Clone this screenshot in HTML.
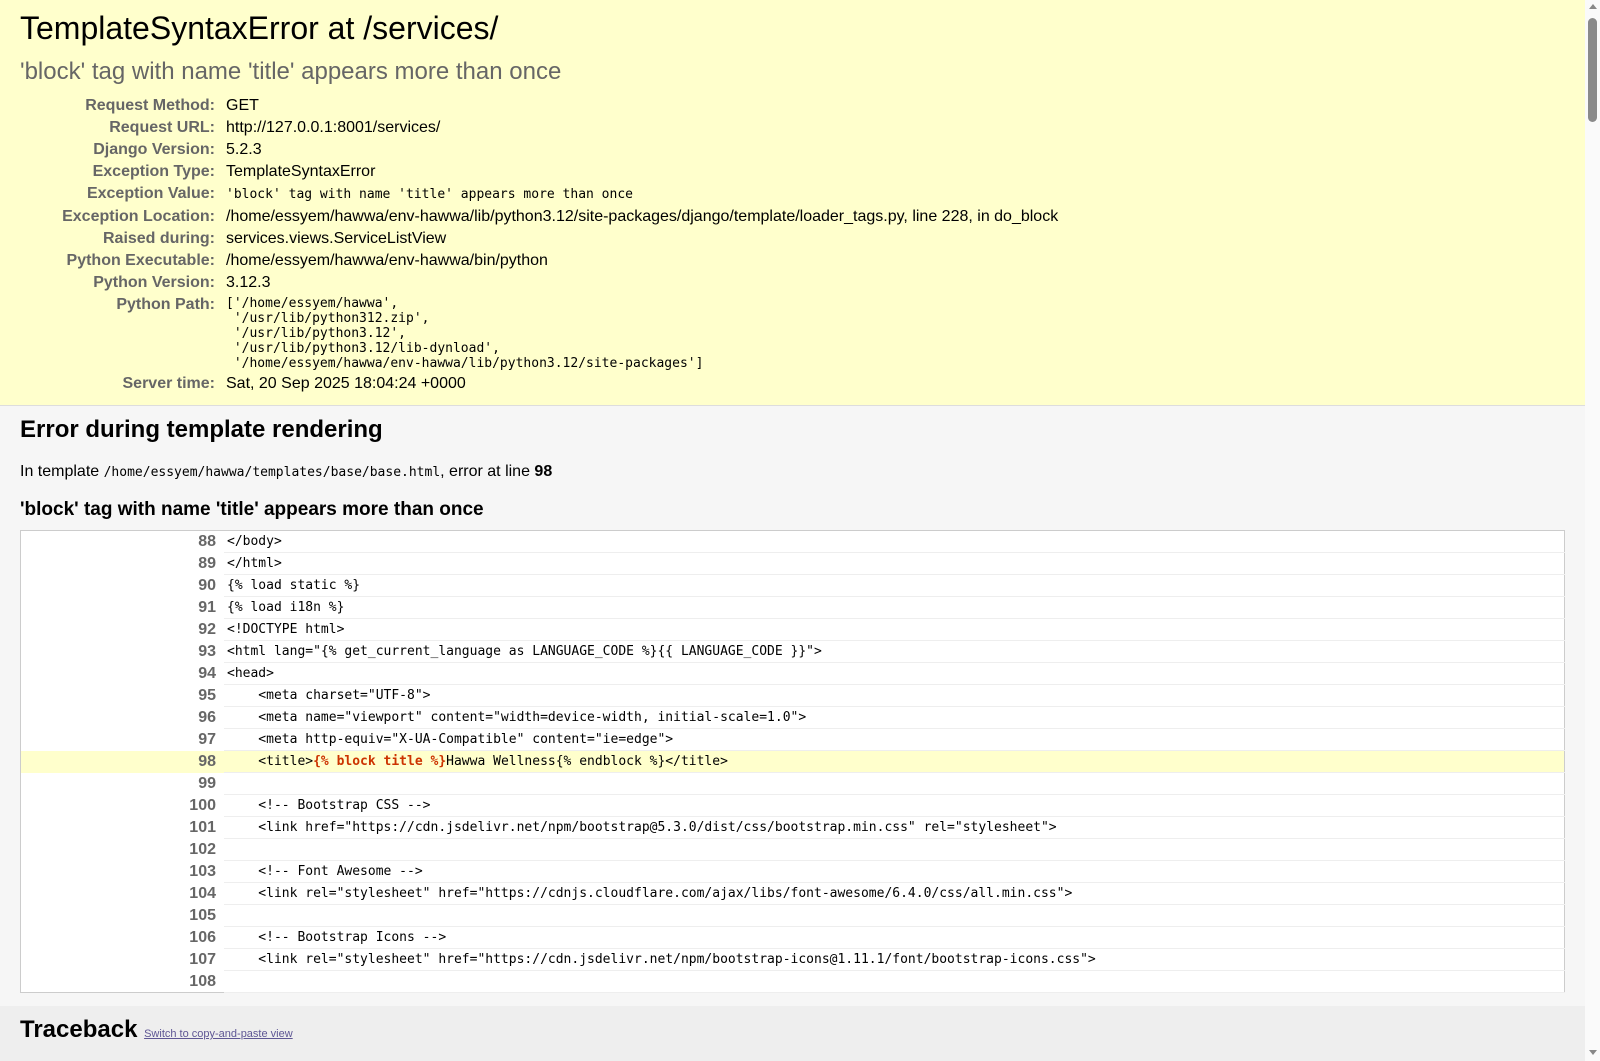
<!DOCTYPE html>
<html><head><meta charset="utf-8"><style>
html,body{margin:0;padding:0;}
html{overflow:hidden;}
body{width:1585px;height:1061px;overflow:hidden;font-family:"Liberation Sans",sans-serif;color:#000;background:#fff;position:relative;}
#summary{background:#ffc;padding:10px 20px;border-bottom:1px solid #ddd;}
h1{font-weight:normal;font-size:32px;line-height:37px;margin:0 0 11px;}
#summary h2{font-weight:normal;color:#666;font-size:24px;line-height:28px;margin:0 0 9px;}
table.meta{border-collapse:collapse;border:none;}
table.meta th{width:192px;text-align:right;color:#666;padding:2px 8px 2px 3px;vertical-align:top;font-size:16px;line-height:18px;font-weight:bold;}
table.meta td{padding:2px 3px;font-size:16px;line-height:18px;vertical-align:top;}
.mono{font-family:"DejaVu Sans Mono",monospace;font-size:13px;}
pre{margin:0;font-family:"DejaVu Sans Mono",monospace;font-size:13px;line-height:15px;}
#template{background:#f6f6f6;padding:10px 20px;height:580px;}
#template h2{font-size:24px;line-height:28px;margin:0 0 19px;}
#template p{margin:0;font-size:16px;line-height:18px;}
#template p code{font-family:"DejaVu Sans Mono",monospace;font-size:13px;}
#template h3{font-size:19px;line-height:22px;margin:17px 0 9px;}
table.source{border:1px solid #ccc;border-collapse:collapse;width:100%;background:#fff;}
table.source th{width:192px;text-align:right;color:#666;padding:0 8px 0 3px;font-size:16px;font-weight:bold;height:21px;line-height:21px;vertical-align:middle;}
table.source td{font-family:"DejaVu Sans Mono",monospace;font-size:13px;white-space:pre;border-bottom:1px solid #eee;padding:0 3px;height:21px;line-height:21px;vertical-align:middle;}
table.source tr.error th,table.source tr.error td{background:#ffc;}
.specific{color:#cc3300;font-weight:bold;}
#traceback{background:#eee;padding:10px 20px;height:60px;}
#traceback h2{font-size:24px;line-height:28px;margin:0;}
#traceback h2 a{font-size:11px;font-weight:normal;color:#5E5694;}
</style></head><body>
<div id="summary">
<h1>TemplateSyntaxError at /services/</h1>
<h2>'block' tag with name 'title' appears more than once</h2>
<table class="meta">
<tr><th>Request Method:</th><td>GET</td></tr>
<tr><th>Request URL:</th><td>http://127.0.0.1:8001/services/</td></tr>
<tr><th>Django Version:</th><td>5.2.3</td></tr>
<tr><th>Exception Type:</th><td>TemplateSyntaxError</td></tr>
<tr><th>Exception Value:</th><td><span class="mono">'block' tag with name 'title' appears more than once</span></td></tr>
<tr><th>Exception Location:</th><td>/home/essyem/hawwa/env-hawwa/lib/python3.12/site-packages/django/template/loader_tags.py, line 228, in do_block</td></tr>
<tr><th>Raised during:</th><td>services.views.ServiceListView</td></tr>
<tr><th>Python Executable:</th><td>/home/essyem/hawwa/env-hawwa/bin/python</td></tr>
<tr><th>Python Version:</th><td>3.12.3</td></tr>
<tr><th>Python Path:</th><td><pre>['/home/essyem/hawwa',
 '/usr/lib/python312.zip',
 '/usr/lib/python3.12',
 '/usr/lib/python3.12/lib-dynload',
 '/home/essyem/hawwa/env-hawwa/lib/python3.12/site-packages']</pre></td></tr>
<tr><th>Server time:</th><td>Sat, 20 Sep 2025 18:04:24 +0000</td></tr>
</table>
</div>
<div id="template">
<h2>Error during template rendering</h2>
<p>In template <code>/home/essyem/hawwa/templates/base/base.html</code>, error at line <strong>98</strong></p>
<h3>'block' tag with name 'title' appears more than once</h3>
<table class="source">
<tr><th>88</th><td>&lt;/body&gt;</td></tr>
<tr><th>89</th><td>&lt;/html&gt;</td></tr>
<tr><th>90</th><td>{% load static %}</td></tr>
<tr><th>91</th><td>{% load i18n %}</td></tr>
<tr><th>92</th><td>&lt;!DOCTYPE html&gt;</td></tr>
<tr><th>93</th><td>&lt;html lang="{% get_current_language as LANGUAGE_CODE %}{{ LANGUAGE_CODE }}"&gt;</td></tr>
<tr><th>94</th><td>&lt;head&gt;</td></tr>
<tr><th>95</th><td>    &lt;meta charset="UTF-8"&gt;</td></tr>
<tr><th>96</th><td>    &lt;meta name="viewport" content="width=device-width, initial-scale=1.0"&gt;</td></tr>
<tr><th>97</th><td>    &lt;meta http-equiv="X-UA-Compatible" content="ie=edge"&gt;</td></tr>
<tr class="error"><th>98</th><td>    &lt;title&gt;<span class="specific">{% block title %}</span>Hawwa Wellness{% endblock %}&lt;/title&gt;</td></tr>
<tr><th>99</th><td></td></tr>
<tr><th>100</th><td>    &lt;!-- Bootstrap CSS --&gt;</td></tr>
<tr><th>101</th><td>    &lt;link href="https://cdn.jsdelivr.net/npm/bootstrap@5.3.0/dist/css/bootstrap.min.css" rel="stylesheet"&gt;</td></tr>
<tr><th>102</th><td></td></tr>
<tr><th>103</th><td>    &lt;!-- Font Awesome --&gt;</td></tr>
<tr><th>104</th><td>    &lt;link rel="stylesheet" href="https://cdnjs.cloudflare.com/ajax/libs/font-awesome/6.4.0/css/all.min.css"&gt;</td></tr>
<tr><th>105</th><td></td></tr>
<tr><th>106</th><td>    &lt;!-- Bootstrap Icons --&gt;</td></tr>
<tr><th>107</th><td>    &lt;link rel="stylesheet" href="https://cdn.jsdelivr.net/npm/bootstrap-icons@1.11.1/font/bootstrap-icons.css"&gt;</td></tr>
<tr><th>108</th><td></td></tr>
</table>
</div>
<div id="traceback">
<h2>Traceback <a href="#">Switch to copy-and-paste view</a></h2>
</div>
<div style="position:absolute;left:1585px;top:0;width:15px;height:1061px;background:#fafafa;">
<div style="position:absolute;left:3px;top:4px;width:0;height:0;border-left:4px solid transparent;border-right:4px solid transparent;border-bottom:5px solid #888;margin-left:1px;"></div>
<div style="position:absolute;left:3px;top:18px;width:9px;height:104px;background:#8a8a8a;border-radius:5px;"></div>
<div style="position:absolute;left:3px;top:1050px;width:0;height:0;border-left:4px solid transparent;border-right:4px solid transparent;border-top:5px solid #888;margin-left:1px;"></div>
</div>
</body></html>
